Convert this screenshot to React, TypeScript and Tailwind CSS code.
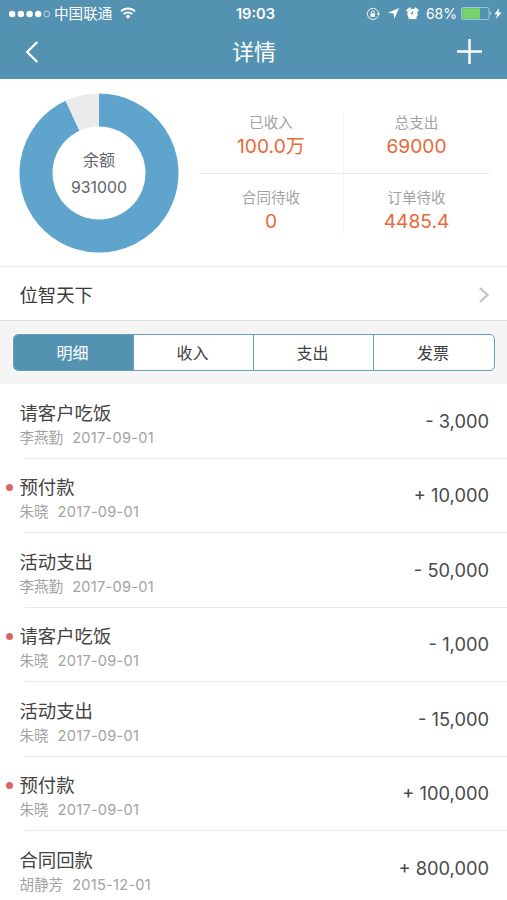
interface Stat {
  label: string;
  value: string;
}

interface RecordItem {
  title: string;
  person: string;
  date: string;
  amount: string;
  unread?: boolean;
}

const STATS: Stat[] = [
  { label: "已收入", value: "100.0万" },
  { label: "总支出", value: "69000" },
  { label: "合同待收", value: "0" },
  { label: "订单待收", value: "4485.4" },
];

const TABS = ["明细", "收入", "支出", "发票"];

const RECORDS: RecordItem[] = [
  { title: "请客户吃饭", person: "李燕勤", date: "2017-09-01", amount: "- 3,000" },
  { title: "预付款", person: "朱晓", date: "2017-09-01", amount: "+ 10,000", unread: true },
  { title: "活动支出", person: "李燕勤", date: "2017-09-01", amount: "- 50,000" },
  { title: "请客户吃饭", person: "朱晓", date: "2017-09-01", amount: "- 1,000", unread: true },
  { title: "活动支出", person: "朱晓", date: "2017-09-01", amount: "- 15,000" },
  { title: "预付款", person: "朱晓", date: "2017-09-01", amount: "+ 100,000", unread: true },
  { title: "合同回款", person: "胡静芳", date: "2015-12-01", amount: "+ 800,000" },
];

function StatusBar() {
  return (
    <div className="grid h-[27px] grid-cols-[1fr_auto_1fr] items-center pl-[9px] pr-[5px] text-[14px] leading-[27px]">
      <div className="flex items-center">
        <svg className="h-[8px] w-[42px]" viewBox="0 0 42 8" fill="currentColor">
          <circle cx="3.2" cy="4" r="3.2" />
          <circle cx="11.9" cy="4" r="3.2" />
          <circle cx="20.6" cy="4" r="3.2" />
          <circle cx="29.2" cy="4" r="3.2" />
          <circle cx="37.7" cy="4" r="2.9" fill="none" stroke="currentColor" strokeWidth="0.6" />
        </svg>
        <span className="ml-[3px] pt-[2px] text-[14.6px] leading-[25px]">中国联通</span>
        <svg className="ml-[8px] mb-[1px] h-[12px] w-[16px]" viewBox="0 0 16 12" fill="none" stroke="currentColor" strokeWidth="1.9">
          <path d="M1 4.4a10 10 0 0 1 14 0" />
          <path d="M3.7 7.2a6.1 6.1 0 0 1 8.6 0" />
          <path d="M8 11.8 5.6 9.3a3.4 3.4 0 0 1 4.8 0z" fill="currentColor" stroke="none" />
        </svg>
      </div>
      <span className="pt-[2px] text-[14.6px] font-semibold leading-[25px]">19:03</span>
      <div className="flex items-center justify-end">
        <svg className="h-[14px] w-[14px]" viewBox="0 0 14 14" fill="none" stroke="currentColor" strokeWidth="0.9">
          <path d="M11.9 9.4a5.6 5.6 0 1 1 .6-2.4" />
          <path d="M11 6.6h3L12.5 8.9z" fill="currentColor" stroke="none" />
          <rect x="4.5" y="6.3" width="4.6" height="3.6" fill="currentColor" stroke="none" />
          <path d="M5.3 6.4V5.2a1.5 1.5 0 0 1 3 0v1.2" />
        </svg>
        <svg className="ml-[8px] h-[11px] w-[11px]" viewBox="0 0 11 11" fill="currentColor">
          <path d="M11 0 6.3 11 5.6 5.6 0 4.8z" />
        </svg>
        <svg className="ml-[7px] h-[13px] w-[13px]" viewBox="0 0 13 13">
          <circle cx="6.5" cy="7" r="5.2" fill="currentColor" />
          <path d="M1.3 3.6 3.7 1.4M11.7 3.6 9.3 1.4" stroke="currentColor" strokeWidth="2" strokeLinecap="round" />
          <path d="M2.7 12.3 3.5 11M10.3 12.3 9.5 11" stroke="currentColor" strokeWidth="1.2" />
          <path d="M6.7 4.2v3L4.6 6" fill="none" stroke="#5492b2" strokeWidth="1" />
        </svg>
        <span className="ml-[7px] text-[14px]">68%</span>
        <svg className="ml-[4px] h-[13px] w-[31px]" viewBox="0 0 31 13">
          <rect x=".5" y=".5" width="27.5" height="12" rx="1.6" fill="none" stroke="#a9cadb" strokeWidth="0.9" />
          <rect x="1.2" y="1.2" width="17.8" height="10.6" rx="0.8" fill="#78d46c" />
          <path d="M29 4.5q2 2 0 4z" fill="#d5e6ee" />
        </svg>
        <svg className="ml-[2px] h-[11px] w-[8px]" viewBox="0 0 8 11" fill="currentColor">
          <path d="M5.2 0 .4 6.2h2.9L2 11l5.6-6.5H4.4z" />
        </svg>
      </div>
    </div>
  );
}

function NavBar() {
  return (
    <div className="flex h-[52px] items-center justify-between pl-[25px] pr-[25px]">
      <svg className="mb-[2px] h-[22px] w-[14px]" viewBox="0 0 14 22" fill="none" stroke="currentColor" strokeWidth="2.4">
        <path d="M12.3 1 2.2 11l10.1 10" />
      </svg>
      <h1 className="mb-[2px] ml-[12px] text-[22px] leading-[30px]">详情</h1>
      <svg className="mb-[3px] h-[25px] w-[25px]" viewBox="0 0 25 25" stroke="currentColor" strokeWidth="2.4">
        <path d="M12.5 0v25M0 12.5h25" />
      </svg>
    </div>
  );
}

function BalanceChart() {
  return (
    <div className="grid h-[160px] w-[160px] place-items-center">
      <svg className="col-start-1 row-start-1" width="160" height="160" viewBox="-80 -80 160 160" fill="none" strokeWidth="33">
        <path d="M0-63A63 63 0 1 1-26.46-57.17" stroke="#5fa4cd" />
        <path d="M-26.46-57.17A63 63 0 0 1 0-63" stroke="#ebebeb" />
      </svg>
      <div className="col-start-1 row-start-1 pt-[1px] text-center text-[#5f6468]">
        <div className="text-[16px] leading-[28px]">余额</div>
        <div className="text-[15.8px] leading-[28px]">931000</div>
      </div>
    </div>
  );
}

function Summary() {
  return (
    <section className="flex h-[188px] border-b border-[#ececec] pl-[19px] pt-[14px]">
      <BalanceChart />
      <div className="ml-[20px] mt-[19px] grid h-[122px] w-[291px] grid-cols-[145px_146px] grid-rows-[62px_60px]">
        {STATS.map((stat, i) => (
          <div
            key={stat.label}
            className={`text-center ${i % 2 === 0 ? "border-r border-r-[#f3f3f3]" : "pr-[1px]"} ${
              i < 2 ? "border-b border-b-[#e9e9e9] pt-px" : "pt-[14px]"
            }`}
          >
            <div className="text-[14.6px] leading-[20px] text-[#a3a3a3]">{stat.label}</div>
            <div className="text-[19.2px] leading-[26px] text-[#e8693a]">{stat.value}</div>
          </div>
        ))}
      </div>
    </section>
  );
}

function Tabs() {
  return (
    <div className="h-[63px] bg-[#f5f5f5] pl-[13px] pr-[12px] pt-[13px]">
      <div className="grid h-[37px] grid-cols-4 divide-x divide-[#6ba0bd] overflow-hidden rounded-[5px] border border-[#6ba0bd] bg-white text-[16px] text-[#404040]">
        {TABS.map((tab, i) => (
          <button key={tab} type="button" className={i === 0 ? "bg-[#5492b2] pr-[2px] text-white" : "pr-[2px]"}>
            {tab}
          </button>
        ))}
      </div>
    </div>
  );
}

function RecordRow({ item }: { item: RecordItem }) {
  return (
    <li className="flex h-[74.5px] flex-col">
      <div className="flex flex-1 items-center pr-[18px]">
        <div className="flex w-[19.4px] shrink-0 pb-[16px] pl-[6px]">
          {item.unread && <span className="h-[7px] w-[7px] rounded-full bg-[#da6565]" />}
        </div>
        <div className="flex-1 pt-[8px]">
          <div className="text-[18.4px] leading-[26px] text-[#444]">{item.title}</div>
          <div className="flex gap-[9px] text-[14.6px] leading-[24px] text-[#a3a3a3]">
            <span>{item.person}</span>
            <span className="tracking-[0.25px]">{item.date}</span>
          </div>
        </div>
        <div className="pt-[1.5px] text-[18.3px] text-[#4a4a4a]">{item.amount}</div>
      </div>
      <div className="ml-[25px] h-px bg-[#ebebeb]" />
    </li>
  );
}

export default function App() {
  return (
    <div className="h-[900px] w-[507px] overflow-hidden bg-white font-[Inter,'Noto_Sans_CJK_SC',sans-serif]">
      <header className="h-[79px] bg-[#5492b2] text-white">
        <StatusBar />
        <NavBar />
      </header>
      <Summary />
      <div className="flex h-[54px] items-center justify-between border-b border-[#e0e0e0] pl-[19.4px] pr-[18px]">
        <span className="pt-[5px] text-[18.4px] text-[#3a3a3a]">位智天下</span>
        <svg className="mt-[2px] h-[16px] w-[10px]" viewBox="0 0 10 16" fill="none" stroke="#c4c4c4" strokeWidth="2.4">
          <path d="M1 1l7.4 7L1 15" />
        </svg>
      </div>
      <Tabs />
      <ul>
        {RECORDS.map((item, i) => (
          <RecordRow key={i} item={item} />
        ))}
      </ul>
    </div>
  );
}
